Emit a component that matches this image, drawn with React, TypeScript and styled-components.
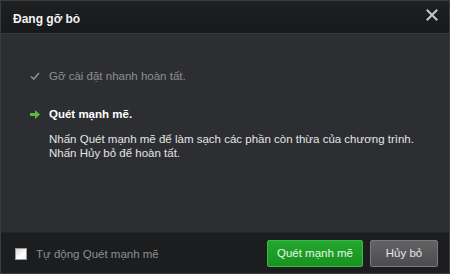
import styled, { createGlobalStyle } from "styled-components";

const GlobalStyle = createGlobalStyle`
  html, body { margin: 0; padding: 0; background: #1a1b1d; }
  body { font-family: "Liberation Sans", Arial, sans-serif; }
`;

const Window = styled.div`
  width: 450px;
  height: 274px;
  box-sizing: border-box;
  border: 1px solid #3a3b3e;
  display: flex;
  flex-direction: column;
  background: #2d2e32;
  overflow: hidden;
`;

const TitleBar = styled.div`
  height: 32px;
  flex-shrink: 0;
  display: flex;
  align-items: center;
  justify-content: space-between;
  padding: 0 10px 0 12px;
  background: linear-gradient(#1f2022, #18191b);
  border-bottom: 1px solid #38393c;
`;

const Title = styled.div`
  color: #f2f2f2;
  font-size: 12px;
  font-weight: bold;
  margin-top: 4px;
`;

const Close = styled.button`
  border: 0;
  background: none;
  padding: 0;
  width: 14px;
  height: 14px;
  margin-top: -4px;
  display: flex;
  align-items: center;
  justify-content: center;
  cursor: pointer;
`;

const Body = styled.div`
  flex: 1;
  padding: 36px 0 0 29px;
  display: flex;
  flex-direction: column;
`;

const Row = styled.div<{ $gap?: number }>`
  display: flex;
  align-items: center;
  gap: 9px;
  margin-bottom: ${(p) => p.$gap ?? 0}px;
`;

const Icon = styled.div`
  width: 10px;
  height: 10px;
  display: flex;
  align-items: center;
  justify-content: center;
`;

const StepText = styled.div<{ $active?: boolean }>`
  font-size: 11.5px;
  color: ${(p) => (p.$active ? "#ffffff" : "#8d8e91")};
  font-weight: ${(p) => (p.$active ? "bold" : "normal")};
`;

const Paragraph = styled.div`
  margin: 12px 0 0 19px;
  font-size: 11.5px;
  line-height: 14px;
  color: #e4e4e4;
`;

const Footer = styled.div`
  height: 40px;
  flex-shrink: 0;
  background: #1c1d1f;
  border-top: 1px solid #232427;
  display: flex;
  align-items: center;
  padding: 0 11px 0 14px;
`;

const CheckLabel = styled.label`
  display: flex;
  align-items: center;
  gap: 9px;
  color: #8d8e91;
  font-size: 11.5px;
  flex: 1;
  margin-top: 1px;
`;

const Box = styled.span`
  width: 10px;
  height: 10px;
  border: 1px solid #9a9a9a;
  background: linear-gradient(135deg, #d8d8d8, #ffffff 60%, #f2f2f2);
`;

const Button = styled.button<{ $primary?: boolean }>`
  height: 27px;
  padding: 0;
  width: ${(p) => (p.$primary ? 96 : 68)}px;
  margin-left: ${(p) => (p.$primary ? 0 : 7)}px;
  border-radius: 2px;
  font-family: "Liberation Sans", Arial, sans-serif;
  font-size: 11.5px;
  color: ${(p) => (p.$primary ? "#e8f6e8" : "#e6e6e6")};
  border: 1px solid ${(p) => (p.$primary ? "#3cb845" : "#7a7a7c")};
  background: ${(p) =>
    p.$primary
      ? "linear-gradient(#23a72e, #18921f)"
      : "linear-gradient(#626264, #4c4c4e)"};
  cursor: pointer;
`;

export default function App() {
  return (
    <>
      <GlobalStyle />
      <Window>
        <TitleBar>
          <Title>Đang gỡ bỏ</Title>
          <Close aria-label="close">
            <svg width="12" height="12" viewBox="0 0 12 12">
              <path d="M1.5 1.5 L10.5 10.5 M10.5 1.5 L1.5 10.5" stroke="#c8c8c8" strokeWidth="2" strokeLinecap="square" />
            </svg>
          </Close>
        </TitleBar>
        <Body>
          <Row $gap={26}>
            <Icon>
              <svg width="10" height="10" viewBox="0 0 10 10">
                <path d="M1 5.5 L3.8 8 L9 2" fill="none" stroke="#8d8e91" strokeWidth="1.6" />
              </svg>
            </Icon>
            <StepText>Gỡ cài đặt nhanh hoàn tất.</StepText>
          </Row>
          <Row>
            <Icon>
              <svg width="10" height="9" viewBox="0 0 10 9">
                <path d="M0 3 H5 V0 L10 4.5 L5 9 V6 H0 Z" fill="#5dbb3a" />
              </svg>
            </Icon>
            <StepText $active>Quét mạnh mẽ.</StepText>
          </Row>
          <Paragraph>
            Nhấn Quét mạnh mẽ để làm sạch các phần còn thừa của chương trình.
            <br />
            Nhấn Hủy bỏ để hoàn tất.
          </Paragraph>
        </Body>
        <Footer>
          <CheckLabel>
            <Box />
            Tự động Quét mạnh mẽ
          </CheckLabel>
          <Button $primary>Quét mạnh mẽ</Button>
          <Button>Hủy bỏ</Button>
        </Footer>
      </Window>
    </>
  );
}
